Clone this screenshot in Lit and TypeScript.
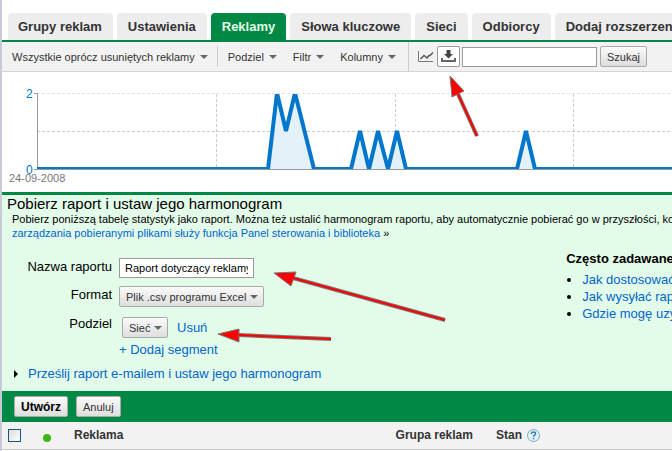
import { LitElement, html, css, svg } from "lit";
import { customElement, property } from "lit/decorators.js";

interface Arrow {
  head: string;
  line: [number, number, number, number];
}

const TABS = [
  "Grupy reklam",
  "Ustawienia",
  "Reklamy",
  "Słowa kluczowe",
  "Sieci",
  "Odbiorcy",
  "Dodaj rozszerzenia",
];

const FAQ = [
  "Jak dostosować raport?",
  "Jak wysyłać raporty e-mailem?",
  "Gdzie mogę uzyskać pomoc?",
];

const ARROWS: Arrow[] = [
  { head: "450,76 452,97 464,91", line: [458, 94, 477, 136] },
  { head: "274,273 291,286 296,272", line: [293, 278, 445, 320] },
  { head: "218,334 239,342 239,329", line: [239, 335, 331, 339] },
];

@customElement("stats-chart")
export class StatsChart extends LitElement {
  static styles = css`
    :host {
      display: block;
      height: 120px;
      overflow: hidden;
      background: #fff;
    }
    .plot {
      display: block;
      width: 100%;
      height: 120px;
    }
    .grid {
      stroke: #ccc;
      stroke-dasharray: 3 2;
    }
    .top {
      stroke: #e4e4e4;
    }
    .axis {
      stroke: #999;
    }
    .area {
      fill: #e5f1f9;
    }
    .series {
      fill: none;
      stroke: #0077cc;
      stroke-width: 4;
    }
    .value {
      font: 12px "Liberation Sans", Arial, sans-serif;
      fill: #0077cc;
    }
    .date {
      font: 11px "Liberation Sans", Arial, sans-serif;
      fill: #777;
    }
  `;

  @property({ attribute: false })
  points: [number, number][] = [
    [35, 0], [266, 0], [275, 2], [284, 1], [293, 2], [312, 0],
    [349, 0], [358, 1], [367, 0], [376, 1], [386, 0], [395, 1],
    [404, 0], [515, 0], [524, 1], [533, 0], [4000, 0],
  ];

  render() {
    const line = this.points.map(([x, v]) => `${x},${97 - v * 38}`).join(" ");
    return html`
      <svg class="plot" role="img" aria-label="Wykres statystyk">
        <defs>
          <clipPath id="frame"><rect x="35" y="22" width="4000" height="76" /></clipPath>
        </defs>
        <line class="grid top" x1="35" y1="21.5" x2="100%" y2="21.5" />
        <line class="grid" x1="35" y1="59.5" x2="100%" y2="59.5" />
        ${[214, 393, 571].map(
          (x) => svg`<line class="grid" x1=${x + 0.5} y1="22" x2=${x + 0.5} y2="97" />`
        )}
        <path class="axis" d="M32 21.5H35.5V97.5H32" fill="none" />
        <g clip-path="url(#frame)">
          <polygon class="area" points=${line} />
          <polyline class="series" points=${line} />
        </g>
        <line class="axis" x1="35" y1="97.5" x2="100%" y2="97.5" />
        <text class="value" x="24" y="26">2</text>
        <text class="value" x="24" y="102">0</text>
        <text class="date" x="7" y="110">24-09-2008</text>
      </svg>
    `;
  }
}

@customElement("app-root")
export class AppRoot extends LitElement {
  static styles = css`
    :host {
      display: block;
      position: relative;
      overflow: hidden;
      min-height: 100vh;
      box-sizing: border-box;
      background: #fff;
      border-left: 2px solid #c9cad8;
      font-family: "Liberation Sans", Arial, sans-serif;
      font-size: 13px;
      color: #000;
      white-space: nowrap;
    }
    a {
      color: #0066cc;
      text-decoration: none;
    }
    button,
    input,
    select {
      font-family: inherit;
      box-sizing: border-box;
      margin: 0;
    }
    .tabs {
      display: flex;
      gap: 4px;
      padding: 13px 0 0 6px;
      overflow: hidden;
      border-bottom: 2px solid #008844;
    }
    .tab {
      flex: none;
      padding: 0 11px 0 10px;
      line-height: 27px;
      height: 27px;
      border-radius: 4px 4px 0 0;
      background: #ededed;
      color: #333;
      font-weight: bold;
    }
    .tab + .tab {
      padding: 0 11px;
    }
    .tab.active {
      background: #008844;
      color: #e3fbe9;
    }
    .toolbar {
      display: flex;
      align-items: center;
      height: 29px;
      background: #f2f2f2;
      border-bottom: 1px solid #d5d5d5;
    }
    .menu {
      display: flex;
      align-items: center;
      gap: 5px;
      padding: 0;
      border: 0;
      background: none;
      color: #333;
      font-size: 11px;
    }
    .menu::after,
    .picker::after {
      content: "";
      border: 4px solid transparent;
      border-top-color: #666;
      border-bottom: 0;
    }
    .filters {
      display: flex;
      padding: 0 9px 0 10px;
    }
    .group {
      display: flex;
      align-items: center;
      gap: 16px;
      height: 21px;
      padding: 0 12px 0 10px;
      border-left: 1px solid #ccc;
    }
    .tools {
      display: flex;
      align-items: center;
      height: 29px;
      padding-left: 9px;
      border-left: 1px solid #ccc;
    }
    .icon {
      display: grid;
      place-items: center;
      width: 16px;
      height: 16px;
      padding: 0;
      border: 0;
      background: none;
    }
    .icon.boxed {
      width: 23px;
      height: 21px;
      margin: 0 2px 0 3px;
      border: 1px solid #999;
      border-radius: 2px;
      background: #fff;
    }
    .field {
      width: 135px;
      height: 20px;
      padding: 0 5px;
      border: 1px solid #999;
      background: #fff;
      font-size: 11px;
      color: #000;
    }
    .push {
      height: 21px;
      padding: 0 6px;
      border: 1px solid #aaa;
      border-radius: 2px;
      background: linear-gradient(#fafafa, #dedede);
      font-size: 11px;
      color: #333;
    }
    .search {
      margin-left: 3px;
    }
    .report {
      background: #e3fbe9;
      border-top: 3px solid #008844;
    }
    .title {
      margin: 0;
      padding: 1px 5px 0;
      font-size: 15px;
      line-height: 16px;
      font-weight: normal;
    }
    .intro {
      margin: 0;
      padding-left: 10px;
      font-size: 11px;
      line-height: 14px;
    }
    .body {
      display: grid;
      grid-template-columns: minmax(0, 16fr) minmax(0, 3fr);
      padding-top: 10px;
    }
    .form {
      display: grid;
      grid-template-columns: 110px 1fr;
      column-gap: 7px;
      row-gap: 8px;
      padding-top: 8px;
      justify-items: start;
    }
    .label {
      justify-self: end;
      line-height: 17px;
    }
    .picker {
      display: inline-grid;
      grid-template-columns: auto 8px;
      align-items: center;
      height: 21px;
    }
    .picker::after {
      grid-area: 1 / 2;
      width: 0;
      margin-left: -6px;
      pointer-events: none;
    }
    .picker .push {
      grid-area: 1 / 1 / 2 / 3;
      appearance: none;
      padding: 0 16px 0 6px;
    }
    .segment {
      display: flex;
      align-items: center;
      gap: 9px;
      padding: 2px 0 0 3px;
    }
    .add {
      grid-column: 2;
      line-height: 16px;
      margin-top: -4px;
    }
    .faq-title {
      margin: 0;
      font-size: 13px;
      line-height: 17px;
    }
    .faq-list {
      margin: 0;
      padding: 4px 0 0 16px;
      line-height: 17px;
    }
    .mail {
      padding: 8px 0 9px 12px;
      line-height: 16px;
    }
    .mail summary {
      display: flex;
      align-items: center;
      gap: 10px;
      color: #0066cc;
      list-style: none;
    }
    .mail summary::before {
      content: "";
      border: 4px solid transparent;
      border-left-color: #000;
      border-right: 0;
    }
    .actions {
      display: flex;
      align-items: center;
      gap: 8px;
      height: 31px;
      padding-left: 12px;
      background: #008844;
    }
    .primary {
      font-weight: bold;
      font-size: 12px;
      color: #000;
    }
    .ads {
      width: 100%;
      table-layout: fixed;
      border-collapse: collapse;
      background: #f2f2f2;
      font-size: 12px;
      color: #333;
    }
    .ads th {
      box-sizing: border-box;
      height: 27px;
      padding: 0 0 0 1px;
      text-align: left;
      border-bottom: 1px solid #ccc;
    }
    .ads .tick {
      width: 33px;
      padding-left: 6px;
    }
    .ads .status {
      width: 38px;
      padding-left: 8px;
    }
    .ads .name {
      width: 48%;
    }
    .ads .adgroup {
      width: 15%;
    }
    .check {
      display: block;
      appearance: none;
      width: 13px;
      height: 13px;
      border: 1px solid #1c5180;
      background: linear-gradient(135deg, #dcdcd7, #fff);
    }
    .dot {
      display: block;
      width: 8px;
      height: 8px;
      margin-top: 5px;
      border-radius: 50%;
      background: #3fb618;
    }
    .state {
      display: flex;
      align-items: center;
      gap: 5px;
    }
    .help {
      display: flex;
    }
    .marks {
      position: absolute;
      inset: 0 auto auto -2px;
      width: 100%;
      height: 100%;
      pointer-events: none;
    }
    .edge {
      stroke: #777;
      stroke-width: 4;
    }
    .core {
      stroke: #f00;
      stroke-width: 2;
    }
    .head {
      fill: #f00;
      stroke: #777;
    }
  `;

  render() {
    return html`
      <nav class="tabs">
        ${TABS.map(
          (t) => html`<a class="tab ${t === "Reklamy" ? "active" : ""}" href="#">${t}</a>`
        )}
      </nav>

      <div class="toolbar">
        <div class="filters">
          <button class="menu">Wszystkie oprócz usuniętych reklamy</button>
        </div>
        <div class="group">
          <button class="menu">Podziel</button>
          <button class="menu">Filtr</button>
          <button class="menu">Kolumny</button>
        </div>
        <div class="tools">
          <button class="icon" aria-label="Wykres">
            <svg width="16" height="14" viewBox="0 0 16 14" fill="none">
              <path d="M.5 1V11.500H15" stroke="#777" />
              <path d="M2.500 9L6 5.500L9 8L11 5.500H12L15 2.500" stroke="#555" stroke-width="1.500" />
            </svg>
          </button>
          <button class="icon boxed" aria-label="Pobierz">
            <svg width="15" height="13" viewBox="0 0 15 13">
              <path d="M5.500 0H9.500V4H12L7.500 8.500L3 4H5.500Z" fill="#444" />
              <path d="M1 8V11H14V8" fill="none" stroke="#666" stroke-width="2" />
            </svg>
          </button>
          <input class="field" type="text" aria-label="Szukaj" />
          <button class="push search">Szukaj</button>
        </div>
      </div>

      <stats-chart></stats-chart>

      <section class="report">
        <h2 class="title">Pobierz raport i ustaw jego harmonogram</h2>
        <p class="intro">
          Pobierz poniższą tabelę statystyk jako raport. Można też ustalić harmonogram raportu, aby
          automatycznie pobierać go w przyszłości, korzystając z harmonogramu. Do<br />
          <a href="#">zarządzania pobieranymi plikami służy funkcja Panel sterowania i biblioteka</a> »
        </p>
        <div class="body">
          <form class="form" @submit=${(e: Event) => e.preventDefault()}>
            <label class="label" for="name">Nazwa raportu</label>
            <input class="field" id="name" type="text" value="Raport dotyczący reklamy" />
            <label class="label" for="format">Format</label>
            <span class="picker">
              <select class="push" id="format"><option>Plik .csv programu Excel</option></select>
            </span>
            <label class="label" for="segment">Podziel</label>
            <div class="segment">
              <span class="picker">
                <select class="push" id="segment"><option>Sieć</option></select>
              </span>
              <a href="#">Usuń</a>
            </div>
            <a class="add" href="#">+ Dodaj segment</a>
          </form>
          <aside>
            <h3 class="faq-title">Często zadawane pytania</h3>
            <ul class="faq-list">
              ${FAQ.map((q) => html`<li><a href="#">${q}</a></li>`)}
            </ul>
          </aside>
        </div>
        <details class="mail">
          <summary>Prześlij raport e-mailem i ustaw jego harmonogram</summary>
        </details>
        <div class="actions">
          <button class="push primary">Utwórz</button>
          <button class="push">Anuluj</button>
        </div>
      </section>

      <table class="ads">
        <thead>
          <tr>
            <th class="tick"><input class="check" type="checkbox" aria-label="Zaznacz wszystkie" /></th>
            <th class="status"><span class="dot"></span></th>
            <th class="name">Reklama</th>
            <th class="adgroup">Grupa reklam</th>
            <th>
              <span class="state">Stan
                <a class="help" href="#" aria-label="Pomoc">
                  <svg width="13" height="13" viewBox="0 0 13 13">
                    <circle cx="6.500" cy="6.500" r="6" fill="#e0f3fa" stroke="#7faab5" />
                    <path d="M4.500 5Q4.500 3 6.500 3Q8.500 3 8.500 4.700Q8.500 5.700 7.300 6.300Q6.500 6.800 6.500 7.700M6.500 8.700V10.200" fill="none" stroke="#2a7ab8" stroke-width="1.400" />
                  </svg>
                </a>
              </span>
            </th>
          </tr>
        </thead>
      </table>

      <svg class="marks" aria-hidden="true">
        ${ARROWS.map(
          ({ head, line: [x1, y1, x2, y2] }) => svg`
            <line class="edge" x1=${x1} y1=${y1} x2=${x2} y2=${y2} />
            <polygon class="head" points=${head} />
            <line class="core" x1=${x1} y1=${y1} x2=${x2} y2=${y2} />`
        )}
      </svg>
    `;
  }
}
